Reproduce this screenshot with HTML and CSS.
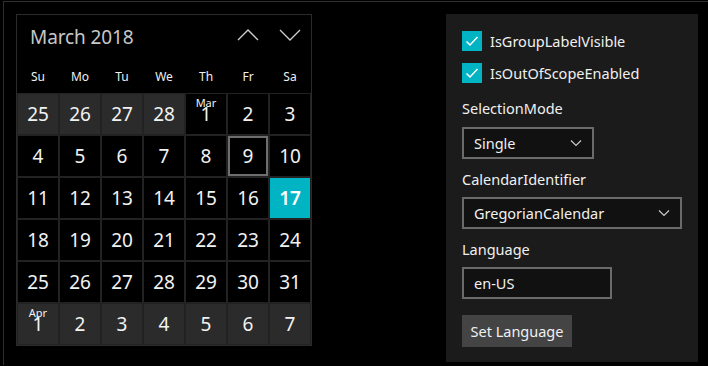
FILE: index.html
```html
<!DOCTYPE html>
<html>
<head>
<meta charset="utf-8">
<link rel="stylesheet" href="styles.css">
</head>
<body>
<div class="frame">
  <div class="content">
    <div class="calendar">
      <div class="cal-header">
        <div class="title">March 2018</div>
        <div class="navs">
          <svg class="nav" width="22" height="12" viewBox="0 0 22 12"><path d="M1 11 L11 1 L21 11" fill="none" stroke="#d0d0d0" stroke-width="1.3"/></svg>
          <svg class="nav" width="22" height="12" viewBox="0 0 22 12"><path d="M1 1 L11 11 L21 1" fill="none" stroke="#d0d0d0" stroke-width="1.3"/></svg>
        </div>
      </div>
      <div class="dow">
        <span>Su</span><span>Mo</span><span>Tu</span><span>We</span><span>Th</span><span>Fr</span><span>Sa</span>
      </div>
      <div class="grid">
        <div class="day out">25</div><div class="day out">26</div><div class="day out">27</div><div class="day out">28</div><div class="day"><span class="mlabel">Mar</span>1</div><div class="day">2</div><div class="day">3</div>
        <div class="day">4</div><div class="day">5</div><div class="day">6</div><div class="day">7</div><div class="day">8</div><div class="day selected">9</div><div class="day">10</div>
        <div class="day">11</div><div class="day">12</div><div class="day">13</div><div class="day">14</div><div class="day">15</div><div class="day">16</div><div class="day today">17</div>
        <div class="day">18</div><div class="day">19</div><div class="day">20</div><div class="day">21</div><div class="day">22</div><div class="day">23</div><div class="day">24</div>
        <div class="day">25</div><div class="day">26</div><div class="day">27</div><div class="day">28</div><div class="day">29</div><div class="day">30</div><div class="day">31</div>
        <div class="day out"><span class="mlabel">Apr</span>1</div><div class="day out">2</div><div class="day out">3</div><div class="day out">4</div><div class="day out">5</div><div class="day out">6</div><div class="day out">7</div>
      </div>
    </div>

    <div class="panel">
      <label class="check">
        <span class="box"><svg width="20" height="20" viewBox="0 0 20 20"><path d="M4.5 10.5 L8 14 L15.5 6" fill="none" stroke="#fff" stroke-width="1.5"/></svg></span>
        <span>IsGroupLabelVisible</span>
      </label>
      <label class="check">
        <span class="box"><svg width="20" height="20" viewBox="0 0 20 20"><path d="M4.5 10.5 L8 14 L15.5 6" fill="none" stroke="#fff" stroke-width="1.5"/></svg></span>
        <span>IsOutOfScopeEnabled</span>
      </label>
      <div class="label first">SelectionMode</div>
      <div class="combo small">
        <span>Single</span>
        <svg width="12" height="8" viewBox="0 0 12 8"><path d="M1 1.5 L6 6.5 L11 1.5" fill="none" stroke="#cfcfcf" stroke-width="1.1"/></svg>
      </div>
      <div class="label">CalendarIdentifier</div>
      <div class="combo wide">
        <span>GregorianCalendar</span>
        <svg width="12" height="8" viewBox="0 0 12 8"><path d="M1 1.5 L6 6.5 L11 1.5" fill="none" stroke="#cfcfcf" stroke-width="1.1"/></svg>
      </div>
      <div class="label">Language</div>
      <div class="textbox">en-US</div>
      <div class="button">Set Language</div>
    </div>
  </div>
</div>
</body>
</html>
```

FILE: styles.css
```css
html, body {
  margin: 0;
  padding: 0;
  background: #000;
  width: 708px;
  height: 366px;
  overflow: hidden;
}
body {
  font-family: "Noto Sans", "Open Sans", sans-serif;
  color: #fff;
}
.frame {
  margin: 1px 0 0 3px;
  border-top: 1px solid #2e2e2e;
  border-left: 1px solid #2e2e2e;
  height: 364px;
  box-sizing: border-box;
}
.content {
  display: flex;
  align-items: flex-start;
  padding: 12px 0 0 12px;
}
.calendar {
  border: 1px solid #2b2b2b;
  width: 294px;
}
.cal-header {
  height: 46px;
  display: flex;
  align-items: flex-start;
  justify-content: space-between;
}
.title {
  font-size: 19px;
  color: #c8c8c8;
  margin: 9px 0 0 13px;
  letter-spacing: -0.1px;
}
.navs {
  display: flex;
  gap: 20px;
  margin: 14px 10px 0 0;
}
.dow {
  display: grid;
  grid-template-columns: repeat(7, 42px);
  height: 32px;
  align-items: center;
  font-size: 12px;
  text-align: center;
  color: #f0f0f0;
}
.dow span {
  margin-top: -2px;
}
.grid {
  display: grid;
  grid-template-columns: repeat(7, 42px);
  grid-auto-rows: 42px;
}
.day {
  position: relative;
  box-sizing: border-box;
  border: 1px solid #222;
  background: #000;
  display: flex;
  align-items: center;
  justify-content: center;
  font-size: 19px;
  color: #f2f2f2;
}
.day.out {
  background: #2b2b2b;
}
.day.selected {
  box-shadow: inset 0 0 0 2px #6e6e6e;
}
.day.today {
  background: #00b4c4;
  color: #fff;
  font-weight: 600;
}
.mlabel {
  position: absolute;
  top: 3px;
  left: 0;
  right: 0;
  text-align: center;
  font-size: 11px;
  line-height: 12px;
}
.panel {
  margin-left: 134px;
  width: 252px;
  height: 348px;
  background: #1b1b1b;
  box-sizing: border-box;
  padding: 17px 16px 0 16px;
  font-size: 14.5px;
  color: #f0f0f0;
}
.check {
  display: flex;
  align-items: center;
  gap: 8px;
  height: 20px;
  margin-bottom: 12px;
}
.box {
  width: 20px;
  height: 20px;
  background: #00b4c4;
  display: block;
}
.box svg { display: block; }
.label {
  height: 20px;
  line-height: 20px;
  margin-top: 10px;
}
.label.first {
  margin-top: 15px;
}
.combo, .textbox {
  margin-top: 8px;
  box-sizing: border-box;
  height: 32px;
  border: 2px solid #6b6b6b;
  background: #111;
  display: flex;
  align-items: center;
  justify-content: space-between;
  padding: 0 10px 0 10px;
}
.combo.small { width: 132px; margin-top: 9px; }
.combo.wide { width: 220px; }
.combo svg { display: block; }
.textbox { width: 150px; }
.button {
  margin-top: 16px;
  width: 110px;
  height: 32px;
  background: #444;
  display: flex;
  align-items: center;
  justify-content: center;
}
```
